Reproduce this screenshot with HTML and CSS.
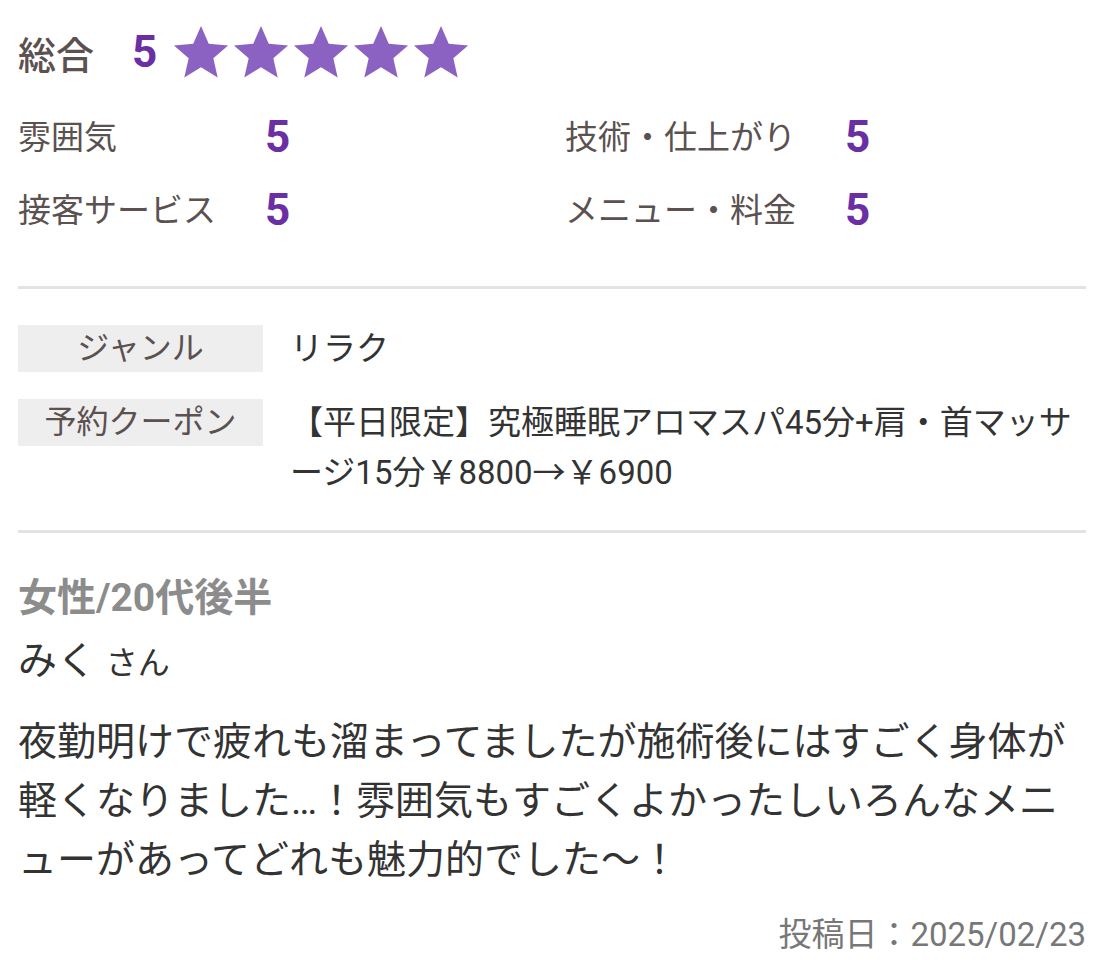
FILE: index.html
```html
<!DOCTYPE html>
<html lang="ja">
<head>
<meta charset="utf-8">
<link rel="stylesheet" href="styles.css">
</head>
<body>
<main class="review">
  <section class="ratings">
    <div class="overall">
      <span class="overall-label">総合</span>
      <span class="overall-score">5</span>
      <span class="stars">
        <svg class="star" viewBox="0 0 24 24"><polygon points="12,1.2 15.2,8.6 23.2,9.3 17.1,14.6 18.9,22.5 12,18.3 5.1,22.5 6.9,14.6 0.8,9.3 8.8,8.6"/></svg>
        <svg class="star" viewBox="0 0 24 24"><polygon points="12,1.2 15.2,8.6 23.2,9.3 17.1,14.6 18.9,22.5 12,18.3 5.1,22.5 6.9,14.6 0.8,9.3 8.8,8.6"/></svg>
        <svg class="star" viewBox="0 0 24 24"><polygon points="12,1.2 15.2,8.6 23.2,9.3 17.1,14.6 18.9,22.5 12,18.3 5.1,22.5 6.9,14.6 0.8,9.3 8.8,8.6"/></svg>
        <svg class="star" viewBox="0 0 24 24"><polygon points="12,1.2 15.2,8.6 23.2,9.3 17.1,14.6 18.9,22.5 12,18.3 5.1,22.5 6.9,14.6 0.8,9.3 8.8,8.6"/></svg>
        <svg class="star" viewBox="0 0 24 24"><polygon points="12,1.2 15.2,8.6 23.2,9.3 17.1,14.6 18.9,22.5 12,18.3 5.1,22.5 6.9,14.6 0.8,9.3 8.8,8.6"/></svg>
      </span>
    </div>
    <div class="detail-grid">
      <span class="d-label">雰囲気</span><span class="d-value">5</span>
      <span class="d-label">技術・仕上がり</span><span class="d-value">5</span>
      <span class="d-label">接客サービス</span><span class="d-value">5</span>
      <span class="d-label">メニュー・料金</span><span class="d-value">5</span>
    </div>
  </section>
  <hr class="divider divider-1">
  <section class="info">
    <div class="info-row">
      <div class="info-label">ジャンル</div>
      <div class="info-value">リラク</div>
    </div>
    <div class="info-row">
      <div class="info-label">予約クーポン</div>
      <div class="info-value">【平日限定】究極睡眠アロマスパ45分+肩・首マッサージ15分￥8800→￥6900</div>
    </div>
  </section>
  <hr class="divider divider-2">
  <section class="comment">
    <div class="reviewer-attr">女性/20代後半</div>
    <div class="reviewer-name">みく <span class="honorific">さん</span></div>
    <p class="comment-body">夜勤明けで疲れも溜まってましたが施術後にはすごく身体が軽くなりました…！雰囲気もすごくよかったしいろんなメニューがあってどれも魅力的でした〜！</p>
    <div class="post-date">投稿日：2025/02/23</div>
  </section>
</main>
</body>
</html>
```

FILE: styles.css
```css
* { box-sizing: border-box; }
html, body { margin: 0; padding: 0; background: #fff; }
body {
  font-family: "Roboto", "Noto Sans CJK JP", sans-serif;
  color: #333;
}
.review { padding: 0 16px 0 18px; }

.overall {
  display: flex;
  align-items: center;
  height: 74px;
  margin-top: 15px;
}
.overall-label {
  font-size: 38px;
  font-weight: 500;
  color: #5b5150;
  width: 114px;
}
.overall-score {
  font-size: 44px;
  font-weight: 700;
  color: #6b2fa3;
  width: 40px;
}
.stars { display: flex; gap: 2px; }
.star { width: 58px; height: 58px; fill: #8b62c1; }

.detail-grid {
  display: grid;
  grid-template-columns: 247px 300px 280px auto;
  margin-top: 12px;
  line-height: 73px;
}
.d-label { font-size: 33px; color: #5b5150; }
.d-value { font-size: 44px; font-weight: 700; color: #6b2fa3; }

.divider {
  border: 0;
  height: 3px;
  background: #e3e3e3;
  margin: 0;
}
.divider-1 { margin-top: 39px; }

.info {
  display: flex;
  flex-direction: column;
  gap: 25px;
  margin-top: 36px;
}
.info-row { display: flex; align-items: flex-start; }
.info-label {
  width: 245px;
  height: 47px;
  flex: none;
  background: #eeeeee;
  color: #5b5150;
  font-size: 32px;
  line-height: 47px;
  text-align: center;
}
.info-value {
  margin-left: 27px;
  font-size: 33px;
  line-height: 50px;
  color: #333;
  margin-top: -1px;
}
.divider-2 { margin-top: 32px; }

.reviewer-attr {
  margin-top: 40px;
  font-size: 39px;
  font-weight: 700;
  color: #8c8c8c;
  line-height: 50px;
}
.reviewer-name {
  margin-top: 13px;
  font-size: 39px;
  line-height: 50px;
  color: #333;
}
.honorific { font-size: 32px; }
.comment-body {
  margin: 25px 0 0;
  font-size: 39px;
  line-height: 59px;
  color: #333;
}
.post-date {
  margin-top: 20px;
  text-align: right;
  font-size: 33px;
  line-height: 50px;
  color: #777;
}
```
